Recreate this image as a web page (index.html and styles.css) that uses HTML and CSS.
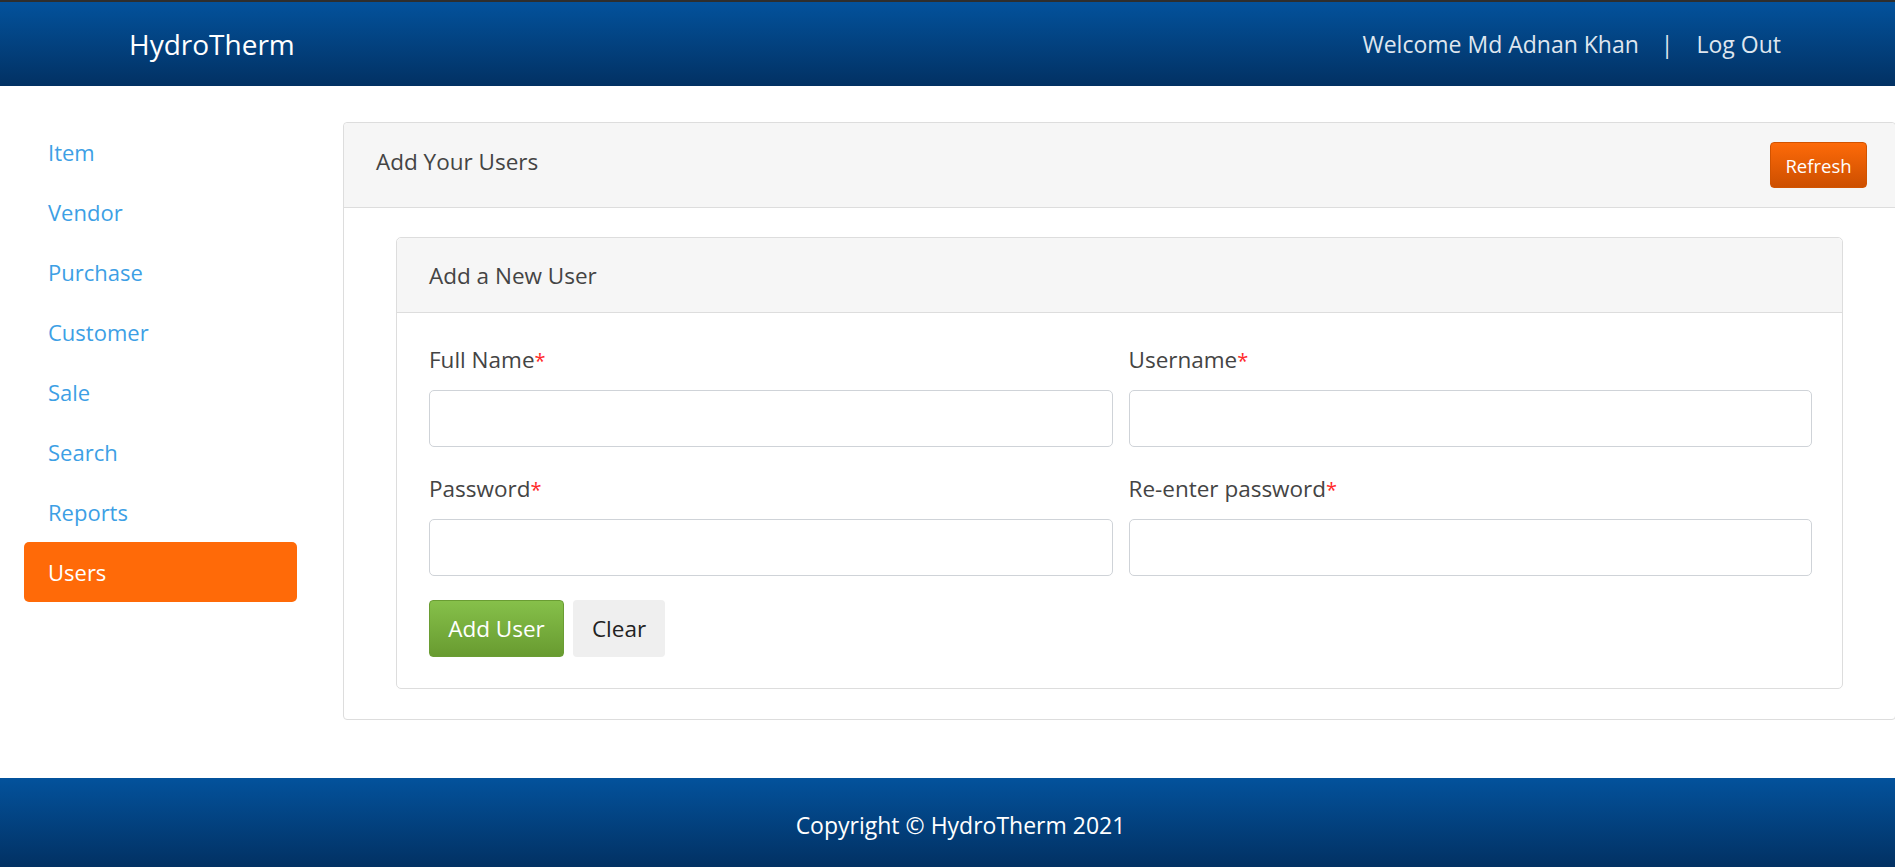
FILE: index.html
```html
<!DOCTYPE html>
<html lang="en">
<head>
<meta charset="utf-8">
<title>HydroTherm - Users</title>
<link rel="stylesheet" href="styles.css">
</head>
<body>
<header class="topbar">
  <div class="brand">HydroTherm</div>
  <div class="userbox">
    <span class="welcome">Welcome Md Adnan Khan</span>
    <span class="sep">|</span>
    <a class="logout" href="#">Log Out</a>
  </div>
</header>

<div class="layout">
  <aside class="sidebar">
    <nav class="nav">
      <a class="nav-item" href="#">Item</a>
      <a class="nav-item" href="#">Vendor</a>
      <a class="nav-item" href="#">Purchase</a>
      <a class="nav-item" href="#">Customer</a>
      <a class="nav-item" href="#">Sale</a>
      <a class="nav-item" href="#">Search</a>
      <a class="nav-item" href="#">Reports</a>
      <a class="nav-item active" href="#">Users</a>
    </nav>
  </aside>

  <main class="content">
    <section class="panel">
      <div class="panel-heading">
        <span class="panel-title">Add Your Users</span>
        <button class="btn btn-refresh" type="button">Refresh</button>
      </div>
      <div class="panel-body">
        <section class="card">
          <div class="card-heading">Add a New User</div>
          <form class="card-body">
            <div class="form-grid">
              <div class="field">
                <label class="label">Full Name<span class="req">*</span></label>
                <input class="input" type="text">
              </div>
              <div class="field">
                <label class="label">Username<span class="req">*</span></label>
                <input class="input" type="text">
              </div>
              <div class="field">
                <label class="label">Password<span class="req">*</span></label>
                <input class="input" type="password">
              </div>
              <div class="field">
                <label class="label">Re-enter password<span class="req">*</span></label>
                <input class="input" type="password">
              </div>
            </div>
            <div class="actions">
              <button class="btn btn-add" type="button">Add User</button>
              <button class="btn btn-clear" type="button">Clear</button>
            </div>
          </form>
        </section>
      </div>
    </section>
  </main>
</div>

<footer class="footer">
  <span>Copyright © HydroTherm 2021</span>
</footer>
</body>
</html>
```

FILE: styles.css
```css
* { box-sizing: border-box; }

html, body {
  margin: 0;
  padding: 0;
  overflow-x: hidden;
}

body {
  font-family: "Open Sans", "Noto Sans", "DejaVu Sans", sans-serif;
  color: #444;
  background: #fff;
  width: 1895px;
}

.topbar {
  height: 86px;
  border-top: 2px solid #2e2e2e;
  background: linear-gradient(to bottom, #03529c 0%, #023163 100%);
  display: flex;
  align-items: center;
  justify-content: space-between;
  padding: 0 114px 0 129px;
  color: #fff;
}

.brand {
  font-size: 28px;
  color: #fff;
}

.userbox {
  display: flex;
  align-items: center;
  font-size: 23px;
  color: #dfe6ef;
}

.sep {
  margin: 0 23px 0 22px;
}

.logout {
  color: #dfe6ef;
  text-decoration: none;
}

.layout {
  display: flex;
  padding-top: 36px;
}

.sidebar {
  flex: none;
  width: 343px;
  padding-left: 24px;
}

.nav {
  width: 273px;
  display: flex;
  flex-direction: column;
}

.nav-item {
  display: block;
  height: 60px;
  line-height: 60px;
  padding: 0 24px;
  font-size: 22px;
  color: #3d9fe5;
  text-decoration: none;
  border-radius: 5px;
}

.nav-item.active {
  background: #ff6a08;
  color: #fff;
}

.content {
  flex: none;
  width: 1553px;
}

.panel {
  border: 1px solid #dddddd;
  border-radius: 4px;
}

.panel-heading {
  height: 85px;
  background: #f6f6f6;
  border-bottom: 1px solid #dddddd;
  display: flex;
  align-items: center;
  justify-content: space-between;
  padding: 0 28px 7px 32px;
  border-radius: 4px 4px 0 0;
}

.panel-title {
  font-size: 22.5px;
  color: #444;
}

.btn {
  font-family: inherit;
  border: none;
  cursor: pointer;
  border-radius: 4px;
}

.btn-refresh {
  width: 97px;
  height: 46px;
  font-size: 18.5px;
  color: #fff;
  background: linear-gradient(to bottom, #fd6a09 0%, #cd4f00 100%);
  border: 1px solid #d25300;
  padding: 0;
  margin-top: 7px;
}

.panel-body {
  padding: 29px 52px 30px 52px;
}

.card {
  border: 1px solid #dddddd;
  border-radius: 5px;
}

.card-heading {
  height: 75px;
  display: flex;
  align-items: center;
  padding-left: 32px;
  background: #f6f6f6;
  border-bottom: 1px solid #dddddd;
  font-size: 22.5px;
  color: #444;
  border-radius: 5px 5px 0 0;
}

.card-body {
  padding: 32px 30px 31px 32px;
  margin: 0;
}

.form-grid {
  display: grid;
  grid-template-columns: 1fr 1fr;
  column-gap: 16px;
  row-gap: 27px;
}

.field {
  display: flex;
  flex-direction: column;
}

.label {
  font-size: 22.5px;
  line-height: 30px;
  margin-bottom: 14px;
  color: #444;
}

.req {
  color: #ff2a2a;
  font-size: 20px;
}

.input {
  height: 57px;
  border: 1px solid #cfd3d8;
  border-radius: 5px;
  background: #fff;
  font-family: inherit;
  font-size: 20px;
  padding: 0 14px;
}

.actions {
  display: flex;
  gap: 9px;
  margin-top: 24px;
}

.btn-add {
  width: 135px;
  height: 57px;
  font-size: 22.5px;
  color: #fff;
  background: linear-gradient(to bottom, #86c04a 0%, #689b30 100%);
  border: 1px solid #6a9d33;
  padding: 0;
}

.btn-clear {
  width: 92px;
  height: 57px;
  font-size: 22.5px;
  color: #222;
  background: #efefef;
  padding: 0;
}

.footer {
  margin-top: 58px;
  height: 89px;
  background: linear-gradient(to bottom, #03529c 0%, #023163 100%);
  display: flex;
  align-items: center;
  justify-content: center;
  padding: 4px 0 0 26px;
  color: #fff;
  font-size: 23px;
}
```
